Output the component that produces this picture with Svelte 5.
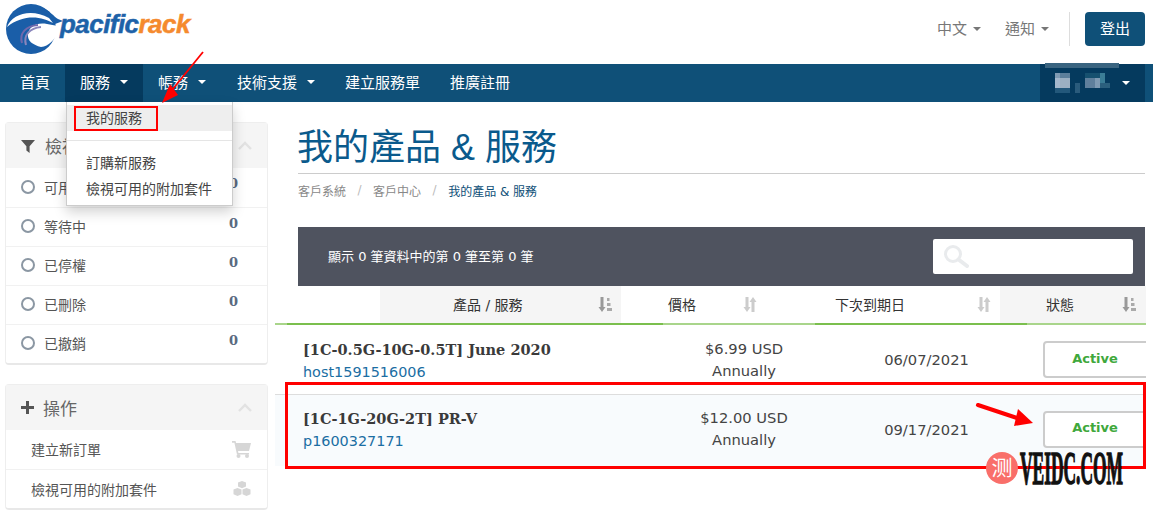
<script>
  const navItems = [
    { label: '首頁' },
    { label: '服務', caret: true, active: true },
    { label: '帳務', caret: true },
    { label: '技術支援', caret: true },
    { label: '建立服務單' },
    { label: '推廣註冊' }
  ];
  const filters = [
    ['可用', 0],
    ['等待中', 0],
    ['已停權', 0],
    ['已刪除', 0],
    ['已撤銷', 0]
  ];
  const rows = [
    { name: '[1C-0.5G-10G-0.5T] June 2020', host: 'host1591516006', price: '$6.99 USD', cycle: 'Annually', due: '06/07/2021' },
    { name: '[1C-1G-20G-2T] PR-V', host: 'p1600327171', price: '$12.00 USD', cycle: 'Annually', due: '09/17/2021' }
  ];
</script>

<div class="page">
  <header class="top">
    <a class="logo" href="#top" aria-label="pacificrack">
      <svg width="64" height="58" viewBox="0 0 64 58">
        <circle cx="31" cy="29" r="25" fill="#1a5ea8" />
        <path d="M40 7C50 10 54 17 58 19L63 21L55 24C50 22 45 18 40 16z" fill="#1a5ea8" />
        <path d="M7 27C12 14 31 8 49 18L53 23C43 17 24 13 7 27z" fill="#fff" />
        <path d="M47 24C36 22 29 27 28 34C27 41 33 45 41 47C49 46 54 40 58 33L58 26z" fill="#fff" />
        <path d="M38 25C26 26 19 33 22 43" fill="none" stroke="#6f68ac" stroke-width="2" />
        <path d="M41 27C30 28 23 35 26 45" fill="none" stroke="#8a86bc" stroke-width="2" />
      </svg>
      <span class="wordmark"><span class="pacific">pacific</span><span class="rack">rack</span></span>
    </a>
    <div class="top-right">
      <span class="top-link">中文<i class="caret grey"></i></span>
      <span class="top-link">通知<i class="caret grey"></i></span>
      <span class="divider"></span>
      <button class="logout">登出</button>
    </div>
  </header>

  <nav class="nav">
    {#each navItems as item}
      <span class="nav-item" class:active={item.active}>{item.label}{#if item.caret}<i class="caret"></i>{/if}</span>
    {/each}
    <div class="account">
      <svg class="blur" width="56" height="20" viewBox="0 0 56 20" aria-hidden="true">
        <rect x="0" y="0" width="5" height="5" fill="#7f9ab3" />
        <rect x="5" y="0" width="10" height="5" fill="#5c7f9b" />
        <rect x="0" y="5" width="5" height="10" fill="#a4b7cc" />
        <rect x="5" y="5" width="10" height="10" fill="#9cb0c2" />
        <rect x="0" y="15" width="15" height="5" fill="#23587b" />
        <rect x="20" y="10" width="5" height="10" fill="#2a5b7c" />
        <rect x="30" y="0" width="20" height="5" fill="#16506f" />
        <rect x="30" y="5" width="10" height="10" fill="#5f7f9c" />
        <rect x="40" y="5" width="5" height="10" fill="#7f9ab3" />
        <rect x="45" y="0" width="5" height="10" fill="#3b7d96" />
        <rect x="45" y="10" width="10" height="5" fill="#2b5f7d" />
      </svg>
      <i class="caret"></i>
    </div>
  </nav>

  <div class="body">
    <aside class="side">
      <section class="panel">
        <div class="panel-head">
          <svg width="14" height="14" viewBox="0 0 14 14"><path d="M0 1h14L8.600 7.200V14L5.400 11.500V7.200z" fill="#555" /></svg>
          <span class="panel-title first">檢視</span>
          <svg class="chev" width="14" height="9" viewBox="0 0 14 9"><path d="M1 8l6-6 6 6" fill="none" stroke="#e2e2e2" stroke-width="2.400" /></svg>
        </div>
        {#each filters as f}
          <div class="row-f">
            <span class="radio"></span>
            <span class="f-label">{f[0]}</span>
            <b class="count">{f[1]}</b>
          </div>
        {/each}
      </section>

      <section class="panel">
        <div class="panel-head">
          <svg width="13" height="13" viewBox="0 0 13 13"><path d="M5 0h3v5h5v3H8v5H5V8H0V5h5z" fill="#555" /></svg>
          <span class="panel-title">操作</span>
          <svg class="chev" width="14" height="9" viewBox="0 0 14 9"><path d="M1 8l6-6 6 6" fill="none" stroke="#e2e2e2" stroke-width="2.400" /></svg>
        </div>
        <div class="row-a">
          <span>建立新訂單</span>
          <svg width="19" height="17" viewBox="0 0 19 17"><path d="M0 0h3.500l.6 2H19l-2 8H6l.4 2H17v1.600H5L2.400 1.700H0z" fill="#d6d6d6" /><circle cx="6.500" cy="15" r="2" fill="#d6d6d6" /><circle cx="15" cy="15" r="2" fill="#d6d6d6" /></svg>
        </div>
        <div class="row-a">
          <span>檢視可用的附加套件</span>
          <svg width="18" height="15" viewBox="0 0 18 15"><path d="M9 0l4 1.600v4L9 7.200l-4-1.600v-4z" fill="#d6d6d6" /><path d="M4.500 7L8.500 8.600v4.600L4.500 15 .5 13.200V8.600z" fill="#d6d6d6" /><path d="M13.500 7l4 1.600v4.600L13.500 15l-4-1.800V8.600z" fill="#d6d6d6" /></svg>
        </div>
      </section>
    </aside>

    <main class="main">
      <div class="head-block">
        <h1>我的產品 &amp; 服務</h1>
        <div class="crumbs">
          <span>客戶系統</span><em>/</em><span>客戶中心</span><em>/</em><span class="cur">我的產品 &amp; 服務</span>
        </div>
        <div class="bar">
          <span class="info">顯示 0 筆資料中的第 0 筆至第 0 筆</span>
          <div class="search">
            <svg width="26" height="26" viewBox="0 0 26 26"><circle cx="10" cy="10" r="7.500" fill="none" stroke="#e9ebed" stroke-width="3" /><path d="M15.500 15.500L24 22" stroke="#e9ebed" stroke-width="4" stroke-linecap="round" /></svg>
          </div>
        </div>
      </div>

      <div class="table">
        <div class="thead">
          <div class="th c0"></div>
          <div class="th c1 sorted"><span class="th-t">產品 / 服務</span>
            <svg class="sort" width="14" height="15" viewBox="0 0 14 15"><path d="M2.500 0h3v10h2L4 15 .5 10h2z" fill="#999" /><path d="M9 1h2.500v3H9zM9 6h3.500v3H9zM9 11h5v3H9z" fill="#aaa" /></svg>
          </div>
          <div class="th c2"><span class="th-t">價格</span>
            <svg class="sort" width="14" height="15" viewBox="0 0 14 15"><path d="M2.500 0h3v10h2L4 15 .5 10h2z" fill="#ccc" /><path d="M8.500 15h3V5h2L10 0 6.500 5h2z" fill="#ccc" /></svg>
          </div>
          <div class="th c3"><span class="th-t">下次到期日</span>
            <svg class="sort" width="14" height="15" viewBox="0 0 14 15"><path d="M2.500 0h3v10h2L4 15 .5 10h2z" fill="#ccc" /><path d="M8.500 15h3V5h2L10 0 6.500 5h2z" fill="#ccc" /></svg>
          </div>
          <div class="th c4 sorted"><span class="th-t">狀態</span>
            <svg class="sort" width="14" height="15" viewBox="0 0 14 15"><path d="M2.500 0h3v10h2L4 15 .5 10h2z" fill="#999" /><path d="M9 1h2.500v3H9zM9 6h3.500v3H9zM9 11h5v3H9z" fill="#aaa" /></svg>
          </div>
        </div>
        <div class="green"><i class="g1"></i><i class="g2"></i><i class="g3"></i><i class="g4"></i><i class="g5"></i></div>
        {#each rows as r, i}
          <div class="tr" class:alt={i === 1}>
            <div class="td-name"><b>{r.name}</b><a href="#top">{r.host}</a></div>
            <div class="td-price"><span>{r.price}</span><span>{r.cycle}</span></div>
            <div class="td-due">{r.due}</div>
            <div class="td-status"><span class="status">Active</span></div>
          </div>
        {/each}
      </div>
    </main>
  </div>

  <div class="menu">
    <div class="menu-item on">我的服務</div>
    <div class="menu-sep"></div>
    <div class="menu-item">訂購新服務</div>
    <div class="menu-item">檢視可用的附加套件</div>
  </div>

  <div class="mark mark-menu"></div>
  <div class="mark mark-row"></div>
  <svg class="arrows" width="1153" height="514" viewBox="0 0 1153 514" aria-hidden="true">
    <path d="M203 52L172 90" stroke="#f00" stroke-width="1.800" fill="none" />
    <path d="M162 103L170 84 178 95z" fill="#f00" />
    <path d="M978 405L1017 418" stroke="#f00" stroke-width="4" stroke-linecap="round" fill="none" />
    <path d="M1033 423L1018 409 1014 426z" fill="#f00" />
  </svg>
  <div class="wm">
    <span class="wm-dot">测</span>
    <span class="wm-text">VEIDC.COM</span>
  </div>
</div>

<style>
  :global(body) { margin: 0; background: #fff; }
  .page {
    position: relative;
    width: 1153px;
    height: 514px;
    overflow: hidden;
    font-family: "DejaVu Sans", "Noto Sans CJK TC", sans-serif;
    color: #555;
    font-size: 14px;
  }
  i { font-style: normal; }
  a { text-decoration: none; }

  .top {
    height: 64px;
    display: flex;
    align-items: flex-start;
    justify-content: space-between;
    padding-right: 8px;
  }
  .logo { display: flex; align-items: flex-start; height: 64px; }
  .logo svg { flex: none; }
  .wordmark {
    margin: 8px 0 0 -4px;
    font: italic 700 26px/32px "Liberation Sans", sans-serif;
    letter-spacing: -0.55px;
    -webkit-text-stroke: 0.5px currentColor;
  }
  .pacific { color: #1d62a8; }
  .rack { color: #f58a2e; }

  .top-right { display: flex; align-items: center; height: 34px; margin-top: 12px; }
  .top-link {
    display: flex;
    align-items: center;
    font-size: 15px;
    color: #777;
    margin-right: 24px;
    padding-bottom: 3px;
  }
  .top-link .caret { margin-left: 6px; margin-top: 3px; }
  .top-link:nth-child(2) { margin-right: 20px; }
  .divider { width: 1px; height: 34px; background: #ddd; margin-right: 15px; }
  .logout {
    width: 60px;
    height: 34px;
    border: 0;
    border-radius: 4px;
    background: #0f5078;
    color: #fff;
    font: 15px "Noto Sans CJK TC", sans-serif;
    padding: 0 0 4px;
  }
  .caret {
    display: inline-block;
    width: 0;
    height: 0;
    margin-left: 7px;
    border: 4px solid transparent;
    border-top-color: #fff;
    border-bottom-width: 0;
  }
  .caret.grey { border-top-color: #777; }

  .nav {
    height: 38px;
    background: #0f5078;
    display: flex;
    padding-left: 5px;
    color: #fff;
    font-size: 15px;
  }
  .nav-item {
    display: flex;
    align-items: center;
    padding: 0 15px 3px;
  }
  .nav-item:nth-child(3) { padding-right: 16px; }
  .nav-item .caret { margin-left: 10px; }
  .nav-item.active { background: #053a5e; }
  .account {
    margin-left: auto;
    margin-right: 8px;
    width: 105px;
    background: #053a5e;
    display: flex;
    align-items: center;
    box-sizing: border-box;
    padding-left: 15px;
    position: relative;
  }
  .account::before {
    content: "";
    position: absolute;
    left: 5px;
    top: -1px;
    width: 74px;
    height: 5px;
    background: #3a6480;
  }
  .account .caret { margin-left: 11px; }
  .blur { flex: none; }

  .body { display: flex; align-items: flex-start; }
  .side {
    width: 263px;
    margin: 20px 7px 0 5px;
    display: flex;
    flex-direction: column;
    gap: 19px;
    flex: none;
  }
  .panel {
    border: 1px solid #eee;
    border-bottom: 2px solid #e8e8e8;
    border-radius: 4px;
    background: #fff;
    box-sizing: border-box;
  }
  .panel-head {
    height: 45px;
    background: #f5f5f5;
    display: flex;
    align-items: center;
    padding: 0 15px;
    gap: 9px;
  }
  .panel-title { font-size: 17px; color: #666; padding-bottom: 1px; }
  .panel-title.first { margin-left: 1px; }
  .chev { margin-left: auto; }
  .row-f {
    height: 39px;
    box-sizing: border-box;
    border-top: 1px solid #f1f1f1;
    display: flex;
    align-items: center;
    padding: 0 29px 2px 15px;
    font-size: 14px;
    color: #555;
  }
  .panel-head + .row-f { border-top: 0; }
  .radio {
    width: 10px;
    height: 10px;
    border: 2px solid #8b97a3;
    border-radius: 50%;
    margin-right: 9px;
    flex: none;
  }
  .f-label { flex: 1; }
  .count {
    font: 700 13px "DejaVu Serif", serif;
    color: #5a6a80;
    margin-top: -6px;
  }
  .row-a {
    height: 39px;
    box-sizing: border-box;
    border-top: 1px solid #f1f1f1;
    display: flex;
    align-items: center;
    justify-content: space-between;
    padding: 0 16px 1px 25px;
    font-size: 14px;
    color: #555;
  }
  .panel-head + .row-a { border-top: 0; }

  .main { flex: 1; min-width: 0; }
  .head-block { padding: 0 8px 0 23px; }
  h1 {
    margin: 20px 0 0;
    height: 51px;
    border-bottom: 1px solid #ccc;
    font: 400 36px/52px "Liberation Sans", "Noto Sans CJK TC", sans-serif;
    color: #0a5a8c;
    text-indent: -1px;
  }
  .crumbs {
    margin-top: 7px;
    height: 18px;
    display: flex;
    align-items: center;
    font-size: 12px;
    color: #888;
  }
  .crumbs em { font-style: normal; margin: 0 11.5px; color: #bbb; }
  .crumbs .cur { color: #0f5078; }
  .bar {
    margin-top: 28px;
    height: 59px;
    background: #4f535f;
    display: flex;
    align-items: center;
    justify-content: space-between;
    padding: 0 12px 0 30px;
    color: #fff;
    font-size: 13px;
  }
  .info { padding-bottom: 2px; }
  .search {
    width: 200px;
    height: 35px;
    background: #fff;
    border-radius: 2px;
    display: flex;
    align-items: center;
    padding-left: 10px;
    box-sizing: border-box;
  }

  .table { width: 871px; overflow: hidden; }
  .thead { display: flex; height: 37px; color: #333; font-size: 14px; }
  .th { position: relative; display: flex; align-items: center; padding-bottom: 2px; box-sizing: border-box; }
  .th.sorted { background: #f5f5f5; }
  .c0 { width: 105px; }
  .c1 { width: 241px; }
  .c2 { width: 220px; }
  .c3 { width: 159px; }
  .c4 { width: 146px; }
  .th-t { position: absolute; white-space: nowrap; }
  .c1 .th-t { left: 73px; }
  .c2 .th-t { left: 47px; }
  .c3 .th-t { left: -6px; }
  .c4 .th-t { left: 46px; }
  .sort { position: absolute; top: 11px; }
  .c1 .sort { left: 218px; }
  .c2 .sort { left: 122px; }
  .c3 .sort { left: 136px; }
  .c4 .sort { left: 122px; }

  .green { display: flex; height: 2px; }
  .green i { display: block; height: 2px; }
  .g1 { width: 12px; background: #a9d58b; }
  .g2 { width: 376px; background: #7bbf4e; }
  .g3 { width: 152px; background: #a9d58b; }
  .g4 { width: 212px; background: #7bbf4e; }
  .g5 { width: 119px; background: #a9d58b; }

  .tr { display: flex; height: 70px; box-sizing: border-box; align-items: center; color: #444; font-size: 14.7px; border-bottom: 1px solid #ddd; }
  .tr.alt { background: #f8fbfd; height: 71px; border-bottom: 0; box-shadow: 0 5px 0 #f7f7f7; padding-bottom: 3px; }
  .td-name { width: 388px; padding: 2px 0 0 28px; box-sizing: border-box; display: flex; flex-direction: column; gap: 2px; }
  .td-name b { font: 700 14.5px/20px "DejaVu Serif", serif; color: #3a3a3a; white-space: nowrap; }
  .td-name a { color: #1b6ea3; font-size: 14.4px; line-height: 20px; }
  .td-price { width: 162px; display: flex; flex-direction: column; align-items: center; line-height: 22px; }
  .td-due { width: 203px; text-align: center; }
  .td-status { flex: 1; padding-left: 15px; min-width: 0; }
  .status {
    display: flex;
    align-items: center;
    justify-content: center;
    box-sizing: border-box;
    width: 108px;
    height: 37px;
    border: 2px solid #ccc;
    border-radius: 4px;
    background: #fff;
    color: #3fa83c;
    font-weight: 700;
    font-size: 13px;
    padding: 0 4px 3px 0;
  }

  .menu {
    position: absolute;
    left: 66px;
    top: 102px;
    width: 167px;
    height: 104px;
    box-sizing: border-box;
    background: #fff;
    border: 1px solid #ccc;
    border-top: 0;
    box-shadow: 0 6px 12px rgba(0, 0, 0, 0.18);
    padding-top: 3px;
    font-size: 14px;
    color: #444;
  }
  .menu-item { height: 26px; line-height: 26px; padding-left: 19px; white-space: nowrap; }
  .menu-item.on { background: #eee; }
  .menu-sep { height: 1px; background: #e5e5e5; margin: 9px 0; }

  .mark { position: absolute; box-sizing: border-box; border: 2px solid #f00; }
  .mark-menu { left: 74px; top: 106px; width: 84px; height: 25px; }
  .mark-row { left: 285px; top: 382px; width: 861px; height: 87px; border-width: 3px; }
  .arrows { position: absolute; left: 0; top: 0; }
  .wm { position: absolute; left: 986px; top: 452px; height: 32px; }
  .wm-dot {
    display: block;
    width: 32px;
    height: 32px;
    border-radius: 50%;
    background: #f96f6a;
    color: #fff;
    font-size: 21px;
    line-height: 32px;
    text-align: center;
  }
  .wm-text {
    position: absolute;
    left: 34px;
    top: 0;
    font: 700 47px/32px "Liberation Serif", serif;
    color: #111;
    -webkit-text-stroke: 1.5px #111;
    transform: scaleX(0.37);
    transform-origin: left center;
    white-space: nowrap;
  }
</style>
